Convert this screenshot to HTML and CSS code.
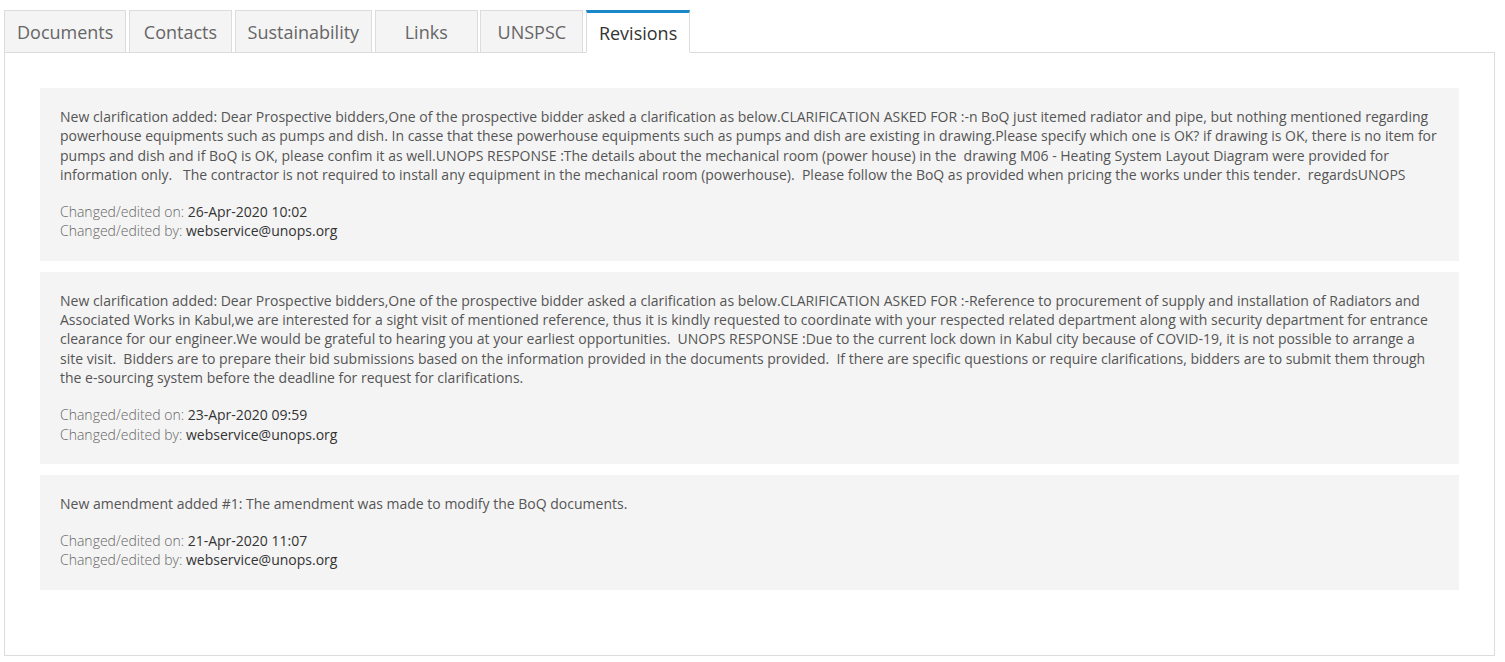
FILE: index.html
```html
<!DOCTYPE html>
<html lang="en">
<head>
    <meta charset="UTF-8">
    <meta name="viewport" content="width=device-width, initial-scale=1.0">
    <title>Tender - Revisions</title>
    <link rel="stylesheet" href="styles.css">
</head>
<body>
    <div class="tabs-wrap">
        <ul class="tabs">
            <li><a href="#">Documents</a></li>
            <li><a href="#">Contacts</a></li>
            <li><a href="#">Sustainability</a></li>
            <li><a href="#">Links</a></li>
            <li><a href="#">UNSPSC</a></li>
            <li class="active"><a href="#">Revisions</a></li>
        </ul>

        <div class="tab-panel">
            <div class="revision">
                <p class="revision-text">New clarification added: Dear Prospective bidders,One of the prospective bidder asked a clarification as below.CLARIFICATION ASKED FOR :-n BoQ just itemed radiator and pipe, but nothing mentioned regarding powerhouse equipments such as pumps and dish. In casse that these powerhouse equipments such as pumps and dish are existing in drawing.Please specify which one is OK? if drawing is OK, there is no item for pumps and dish and if BoQ is OK, please confim it as well.UNOPS RESPONSE :The details about the mechanical room (power house) in the &nbsp;drawing M06 - Heating System Layout Diagram were provided for information only. &nbsp; The contractor is not required to install any equipment in the mechanical room (powerhouse). &nbsp;Please follow the BoQ as provided when pricing the works under this tender. &nbsp;regardsUNOPS</p>
                <div class="meta"><span class="label">Changed/edited on:</span> <span class="value">26-Apr-2020 10:02</span></div>
                <div class="meta"><span class="label">Changed/edited by:</span> <span class="value">webservice@unops.org</span></div>
            </div>

            <div class="revision">
                <p class="revision-text">New clarification added: Dear Prospective bidders,One of the prospective bidder asked a clarification as below.CLARIFICATION ASKED FOR :-Reference to procurement of supply and installation of Radiators and Associated Works in Kabul,we are interested for a sight visit of mentioned reference, thus it is kindly requested to coordinate with your respected related department along with security department for entrance clearance for our engineer.We would be grateful to hearing you at your earliest opportunities. &nbsp;UNOPS RESPONSE :Due to the current lock down in Kabul city because of COVID-19, it is not possible to arrange a site visit. &nbsp;Bidders are to prepare their bid submissions based on the information provided in the documents provided. &nbsp;If there are specific questions or require clarifications, bidders are to submit them through the e-sourcing system before the deadline for request for clarifications.</p>
                <div class="meta"><span class="label">Changed/edited on:</span> <span class="value">23-Apr-2020 09:59</span></div>
                <div class="meta"><span class="label">Changed/edited by:</span> <span class="value">webservice@unops.org</span></div>
            </div>

            <div class="revision">
                <p class="revision-text">New amendment added #1: The amendment was made to modify the BoQ documents.</p>
                <div class="meta"><span class="label">Changed/edited on:</span> <span class="value">21-Apr-2020 11:07</span></div>
                <div class="meta"><span class="label">Changed/edited by:</span> <span class="value">webservice@unops.org</span></div>
            </div>
        </div>
    </div>
</body>
</html>
```

FILE: styles.css
```css
body {
    margin: 0;
    font-family: 'Open Sans', 'Noto Sans', sans-serif;
    background: #fff;
    color: #555;
}

.tabs-wrap {
    padding: 10px 10px 7px 4px;
}

.tabs {
    list-style: none;
    margin: 0;
    padding: 0;
    display: flex;
    gap: 2.6px;
    margin-bottom: -1px;
    position: relative;
    z-index: 1;
}

.tabs li {
    border: 1px solid #dcdcdc;
    background: #f4f4f4;
    min-width: 103px;
    box-sizing: border-box;
}

.tabs a {
    display: block;
    padding: 0 12px;
    height: 41px;
    line-height: 43px;
    font-size: 18px;
    color: #666;
    text-align: center;
    text-decoration: none;
}

.tabs li.active {
    background: #fff;
    border-top: 3px solid #1a87c9;
    border-bottom-color: #fff;
}

.tabs li.active a {
    color: #333;
    height: 39px;
    line-height: 40px;
}

.tab-panel {
    border: 1px solid #dcdcdc;
    padding: 35px 35px 65px;
}

.revision {
    background: #f4f4f4;
    padding: 19px 20px 20px;
    font-size: 14px;
    line-height: 19.3px;
}

.revision + .revision {
    margin-top: 11px;
}

.revision-text {
    margin: 0 0 18px;
    color: #555;
}

.meta .label {
    font-weight: 300;
    color: #666;
}

.meta .value {
    color: #333;
}
```
